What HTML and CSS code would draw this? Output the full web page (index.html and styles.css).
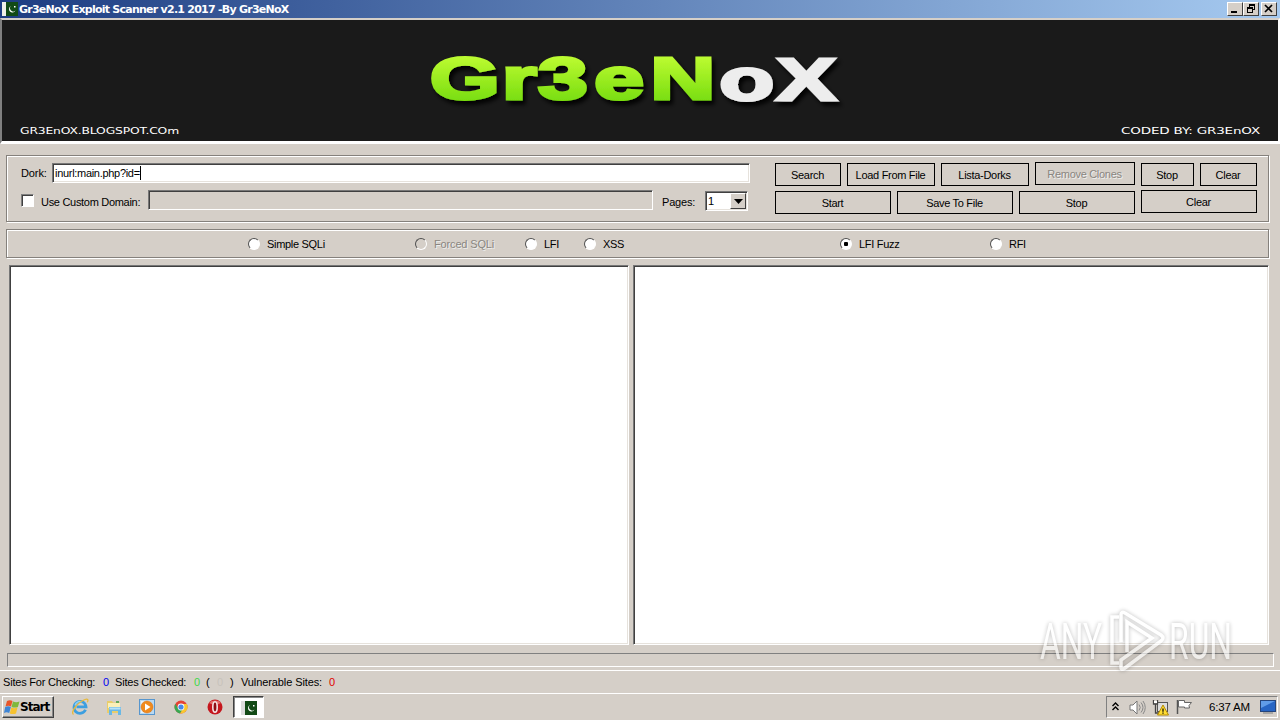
FILE: index.html
```html
<!DOCTYPE html>
<html lang="en">
<head>
    <meta charset="UTF-8">
    <title>Gr3eNoX Exploit Scanner v2.1 2017 -By Gr3eNoX</title>
    <link rel="stylesheet" href="styles.css">
</head>
<body>
    <div class="titlebar">
        <svg width="16" height="14" viewBox="0 0 16 14"><rect x="4" width="12" height="14" fill="#124a16"/><rect width="4" height="14" fill="#f0f0e8"/><path d="M9 4a3.400 3.400 0 1 0 4.500 4.500A3 3 0 1 1 9 4z" fill="#fff"/><rect x="12" y="4" width="1.500" height="1.500" fill="#fff"/></svg>
        <span class="title-text">Gr3eNoX Exploit Scanner v2.1 2017 -By Gr3eNoX</span>
        <div class="win-buttons">
            <div class="win-btn"><svg width="14" height="12"><path d="M3 8h6v2H3z"/></svg></div>
            <div class="win-btn"><svg width="14" height="12"><path d="M5 1h6v6H9V6h1V3H6v1H5zM3 4h6v6H3zM4 6v3h4V6z" fill-rule="evenodd"/></svg></div>
            <div class="win-btn close"><svg width="14" height="12"><path d="M3 2l7 7M10 2L3 9" stroke="#000" stroke-width="1.700"/></svg></div>
        </div>
    </div>

    <div class="banner">
        <svg width="1276" height="121" viewBox="2 20 1276 121">
            <defs>
                <linearGradient id="lime" x1="0" y1="0" x2="0" y2="1">
                    <stop offset="0.2" stop-color="#bafa30"/>
                    <stop offset="0.85" stop-color="#78dd10"/>
                </linearGradient>
                <filter id="shadow" x="-10%" y="-20%" width="120%" height="150%">
                    <feDropShadow dx="3" dy="4" stdDeviation="2" flood-color="#000" flood-opacity="0.9"/>
                </filter>
            </defs>
            <g class="logo" filter="url(#shadow)">
                <text class="logo-green" transform="scale(1.5 1)" x="286.500 334.500 358.500 396 433.500" y="99">Gr3eN</text>
                <text class="logo-white" transform="scale(1.5 1)" x="479.500 517.500" y="100">oX</text>
            </g>
            <text class="pixel" x="20" y="134" textLength="159" lengthAdjust="spacingAndGlyphs">GR3EnOX.BLOGSPOT.COm</text>
            <text class="pixel" x="1121" y="134" textLength="139" lengthAdjust="spacingAndGlyphs">CODED BY: GR3EnOX</text>
        </svg>
    </div>

    <div class="group search-group">
        <div class="fields">
            <div class="field-row">
                <span class="label dork-label">Dork:</span>
                <div class="sunken dork"><span class="typed">inurl:main.php?id=</span><i class="caret"></i></div>
            </div>
            <div class="field-row second">
                <div class="checkbox"></div>
                <span class="label domain-label">Use Custom Domain:</span>
                <div class="sunken domain"></div>
                <span class="label pages-label">Pages:</span>
                <div class="sunken combo"><span>1</span><div class="drop"><svg width="9" height="5"><path d="M0 0h9L4.500 5z"/></svg></div></div>
            </div>
        </div>
        <div class="buttons">
            <button class="w66">Search</button>
            <button class="w88">Load From File</button>
            <button class="w88">Lista-Dorks</button>
            <button class="w100 raised" disabled>Remove Clones</button>
            <button class="w53">Stop</button>
            <button class="w57">Clear</button>
            <button class="w116">Start</button>
            <button class="w116">Save To File</button>
            <button class="w116">Stop</button>
            <button class="w116 raised">Clear</button>
        </div>
    </div>

    <div class="group modes">
        <div class="mode simple"><i class="radio"></i><span>Simple SQLi</span></div>
        <div class="mode forced"><i class="radio"></i><span>Forced SQLi</span></div>
        <div class="mode lfi"><i class="radio"></i><span>LFI</span></div>
        <div class="mode xss"><i class="radio"></i><span>XSS</span></div>
        <div class="mode fuzz"><i class="radio checked"></i><span>LFI Fuzz</span></div>
        <div class="mode rfi"><i class="radio"></i><span>RFI</span></div>
    </div>

    <div class="lists">
        <div class="sunken list-left"></div>
        <div class="sunken list-right"></div>
    </div>
    <div class="progress"></div>

    <div class="status">
        <span class="s-checking">Sites For Checking:</span><span class="n blue">0</span>
        <span class="s-checked">Sites Checked:</span><span class="n green">0</span>
        <span class="s-open">(</span><span class="n pale">0</span><span class="s-close">)</span>
        <span class="s-vuln">Vulnerable Sites:</span><span class="n red">0</span>
    </div>

    <div class="taskbar">
        <div class="start">
            <svg width="16" height="16" viewBox="0 0 16 16"><path d="M3 2q3-1.500 5.500 0L7 7.500Q4.500 6 1.500 7.500z" fill="#e8552a"/><path d="M9 2.500q3 1.300 6.500 0L13.900 8q-3 1.200-6.400 0z" fill="#7fb83c"/><path d="M1.200 8q3-1.400 5.700 0L5.200 14q-2.700-1.300-5.200 0z" fill="#3f85d5"/><path d="M7.300 8.500q3 1.300 6.200 0L12 14.500q-3 1.200-6.200 0z" fill="#f6c22f"/></svg>
            <span>Start</span>
        </div>
        <div class="quick">
            <svg width="18" height="18" viewBox="0 0 18 18"><path d="M14.500 11.800A6 6 0 1 1 15 8.800H5.500" fill="none" stroke="#3c9fe0" stroke-width="2.800"/><path d="M4 7.500A5 5 0 0 1 11 4" fill="none" stroke="#8fd3f8" stroke-width="1.300"/><path d="M2.500 16.500C-1 14 7 4 14 1.500c3-1 3.500.5 2.300 2.800" fill="none" stroke="#e8b93a" stroke-width="1.300"/></svg>
            <svg width="18" height="18" viewBox="0 0 18 18"><path d="M2 3h5l1 1.500h7V15H2z" fill="#e9cd6a"/><path d="M3 5h12v5H3z" fill="#faf0b8"/><path d="M11 3h3v2h-3z" fill="#62a95a"/><path d="M4 9h12v8h-3v-4H7v4H4z" fill="#69b8e5"/><path d="M4.500 9.500h11v2h-11z" fill="#b8e2f6"/></svg>
            <svg width="18" height="18" viewBox="0 0 18 18"><rect x="1.500" y="1.500" width="15" height="15" fill="#b9d9f2" stroke="#5796ce"/><rect x="3" y="3" width="9" height="12" fill="#e5f2fb"/><circle cx="9" cy="9" r="6" fill="#f08a1d" stroke="#d36c12" stroke-width=".5"/><path d="M7 5.500L12.500 9 7 12.500z" fill="#fff"/></svg>
            <svg width="18" height="18" viewBox="0 0 18 18"><circle cx="9" cy="9" r="6.500" fill="#e44335"/><path d="M3.300 5.800A6.500 6.500 0 0 0 8 15.400L11.500 10.500 6.200 10.500z" fill="#38a852"/><path d="M9 6h5.800A6.500 6.500 0 0 1 8 15.400l3.800-6z" fill="#f9c72f"/><circle cx="9" cy="9" r="3.400" fill="#fff"/><circle cx="9" cy="9" r="2.600" fill="#4788e9"/></svg>
            <svg width="18" height="18" viewBox="0 0 18 18"><circle cx="9" cy="9" r="7.500" fill="#c5161d"/><path d="M3 5a7.500 6 0 0 1 12 0q-6 3-12 0z" fill="#e46a67"/><ellipse cx="9" cy="9" rx="2.200" ry="5.200" fill="#8f0d13" stroke="#f4e4e4" stroke-width="1.600"/></svg>
        </div>
        <div class="task">
            <svg width="16" height="14" viewBox="0 0 16 14"><rect x="4" width="12" height="14" fill="#124a16"/><rect width="4" height="14" fill="#ddd"/><path d="M9 4a3.400 3.400 0 1 0 4.500 4.500A3 3 0 1 1 9 4z" fill="#fff"/><rect x="12" y="4" width="1.500" height="1.500" fill="#fff"/></svg>
        </div>
        <div class="tray">
            <svg class="chevrons" width="7" height="9" viewBox="0 0 7 9"><path d="M.5 4L3.500 1l3 3M.5 8L3.500 5l3 3" fill="none" stroke="#000" stroke-width="1.400"/></svg>
            <svg class="speaker" width="17" height="15" viewBox="0 0 17 15"><path d="M1 5h3l4-4v13l-4-4H1z" fill="#fff" stroke="#777"/><path d="M10 4.500q2.500 3 0 6M12 2.500q4 5 0 10M14 1q4.500 6.500 0 13" fill="none" stroke="#888"/></svg>
            <svg class="network" width="17" height="17" viewBox="0 0 17 17"><rect x="5.500" y="3.500" width="10" height="9" fill="#ddd" stroke="#555"/><path d="M1.500 1v4h4V1M3.500 5v9H8" fill="none" stroke="#444" stroke-width="1.300"/><path d="M2 2h3v2H2z" fill="#fff"/><path d="M11 6l5.500 10h-11z" fill="#fd3" stroke="#b48a00"/><path d="M10.400 9.500h1.200v3.200h-1.200zM10.400 13.500h1.200v1.200h-1.200z"/></svg>
            <svg class="flag-icon" width="17" height="15" viewBox="0 0 17 15"><path d="M1.500 1v14" stroke="#555" stroke-width="1.500"/><path d="M2.500 1.500h6v2h7l-2.500 3 .5 2.500h-5V8h-6z" fill="#fff" stroke="#666"/></svg>
            <span class="clock">6:37 AM</span>
            <svg width="16" height="14" viewBox="0 0 16 14"><rect x=".5" y=".5" width="15" height="11" fill="#2765c4" stroke="#25457c"/><path d="M1 1h14L1 8z" fill="#609ce8"/><path d="M3 13h10" stroke="#999" stroke-width="1.500"/></svg>
        </div>
    </div>

    <svg class="watermark" width="214" height="76" viewBox="1032 600 214 76">
        <text x="1040" y="659" textLength="62" lengthAdjust="spacingAndGlyphs">ANY</text>
        <text x="1169" y="659" textLength="63" lengthAdjust="spacingAndGlyphs">RUN</text>
        <path d="M1119 617h-7v46h7M1121 642v-27q0-4 4-2l36 22q4 3 0 6l-36 27q-4 3-4-1v-7l31-22-25-16v30"/>
    </svg>
</body>
</html>
```
FILE: styles.css
```css
* {
    box-sizing: border-box;
}
body {
    margin: 0;
    width: 1280px;
    height: 720px;
    overflow: hidden;
    position: relative;
    background: #d5cfc8;
    color: #000;
    font-family: "Liberation Sans", Arial, sans-serif;
    font-size: 11px;
    line-height: 13px;
    letter-spacing: -0.1px;
    white-space: nowrap;
}
svg {
    display: block;
    flex: none;
}

/* title bar */
.titlebar {
    display: flex;
    align-items: center;
    height: 18px;
    padding: 0 3px 0 2px;
    background: linear-gradient(90deg, #1d3d82, #a6caf0);
}
.title-text {
    margin-left: 1px;
    padding-top: 1px;
    color: #fff;
    font: bold 11px/14px "DejaVu Sans", sans-serif;
    letter-spacing: -0.75px;
}
.win-buttons {
    display: flex;
    margin-left: auto;
}
.win-btn {
    width: 16px;
    height: 14px;
    border: 1px solid;
    border-color: #fff #404040 #404040 #fff;
    background: #d5cfc8;
    overflow: hidden;
}
.close {
    margin-left: 2px;
}

/* banner */
.banner {
    height: 126px;
    border: 2px solid;
    border-width: 2px 2px 3px;
    border-color: #d5cfc8 #fff #fff #808080;
    background: #1a1a1a;
}
.logo {
    font: bold 60px "Liberation Sans", Arial, sans-serif;
    letter-spacing: 0;
    stroke-width: 3px;
    stroke-linejoin: miter;
}
.logo-green {
    fill: url(#lime);
    stroke: url(#lime);
}
.logo-white {
    fill: #ededed;
    stroke: #ededed;
}
.pixel {
    font: 8px "DejaVu Sans", sans-serif;
    fill: #fff;
}

/* etched groups */
.group {
    width: 1263px;
    margin-left: 6px;
    border: 1px solid #85817c;
    box-shadow: 1px 1px 0 #fff, inset 1px 1px 0 #fff;
    display: flex;
}
.search-group {
    height: 67px;
    margin-top: 11px;
    padding: 7px 0 0 14px;
}
.fields {
    width: 754px;
}
.field-row {
    display: flex;
    height: 20px;
}
.second {
    margin-top: 7px;
    height: 22px;
}
.sunken {
    background: #fff;
    border: 1px solid;
    border-color: #777 #fff #fff #777;
    box-shadow: inset 1px 1px 0 #404040, inset -1px -1px 0 #e6e2dc;
}
.label {
    flex: none;
}
.dork-label {
    width: 31px;
    padding-top: 4px;
}
.dork {
    display: flex;
    width: 698px;
    padding: 2px 2px;
}
.typed {
    padding-top: 1px;
    letter-spacing: -0.3px;
}
.caret {
    width: 1px;
    height: 14px;
    background: #000;
}
.checkbox {
    width: 13px;
    height: 13px;
    margin-top: 4px;
    background: #fff;
    border: 1px solid;
    border-color: #808080 #fff #fff #808080;
    box-shadow: inset 1px 1px 0 #404040;
}
.domain-label {
    width: 114px;
    padding: 6px 0 0 7px;
    letter-spacing: -0.3px;
}
.domain {
    width: 505px;
    height: 20px;
    background: #d5cfc8;
    box-shadow: inset 1px 1px 0 #404040;
}
.pages-label {
    width: 52px;
    padding: 6px 0 0 9px;
    letter-spacing: -0.2px;
}
.combo {
    display: flex;
    width: 43px;
    height: 20px;
    margin-top: 1px;
    padding: 1px;
}
.combo span {
    width: 24px;
    padding: 2px 0 0 1px;
}
.drop {
    width: 16px;
    height: 16px;
    padding: 5px 0 0 3px;
    background: #d5cfc8;
    border: 1px solid;
    border-color: #fff #404040 #404040 #fff;
}
.buttons {
    display: flex;
    flex-wrap: wrap;
    align-content: flex-start;
    gap: 5px 6px;
    width: 483px;
}
button {
    height: 23px;
    padding: 1px 1px 0 0;
    border: 1px solid #000;
    border-radius: 0;
    background: #d5cfc8;
    color: #000;
    font: 11px/13px "Liberation Sans", Arial, sans-serif;
    letter-spacing: -0.3px;
}
button:disabled {
    color: #8a8680;
    text-shadow: 1px 1px 0 #eee;
}
.raised {
    margin: -1px 0 1px;
}
.w53 { width: 53px; }
.w57 { width: 57px; }
.w66 { width: 66px; }
.w88 { width: 88px; }
.w100 { width: 100px; }
.w116 { width: 116px; }

/* scan modes */
.modes {
    height: 29px;
    margin-top: 7px;
    padding-left: 241px;
    align-items: center;
}
.mode {
    display: flex;
    align-items: center;
    gap: 7px;
    flex: none;
}
.mode span {
    padding-top: 2px;
    letter-spacing: -0.3px;
}
.radio {
    width: 12px;
    height: 12px;
    border: 1px solid;
    border-color: #505050 #fff #fff #505050;
    border-radius: 50%;
    background: #fff;
}
.checked {
    background: radial-gradient(circle, #000 0 2px, #fff 2.5px);
}
.simple { width: 167px; }
.forced { width: 110px; }
.lfi { width: 59px; }
.xss { width: 256px; }
.fuzz { width: 150px; }
.forced span {
    color: #8a8680;
    letter-spacing: -0.15px;
    text-shadow: 1px 1px 0 #eee;
}
.forced .radio {
    background: #d5cfc8;
}

/* result lists */
.lists {
    display: flex;
    gap: 4px;
    margin: 7px 0 0 9px;
    height: 380px;
}
.list-left {
    width: 620px;
}
.list-right {
    width: 636px;
}
.progress {
    width: 1267px;
    height: 14px;
    margin: 8px 0 0 7px;
    border: 1px solid;
    border-color: #808080 #fff #fff #808080;
}

/* status strip */
.status {
    display: flex;
    height: 24px;
    margin-top: 3px;
    padding: 5px 0 0 3px;
    border: solid #fff;
    border-width: 1px 0;
}
.status span {
    flex: none;
}
.s-checking { width: 99px; letter-spacing: -0.2px; }
.s-checked { width: 78px; letter-spacing: -0.2px; }
.s-open { width: 11px; }
.s-close { width: 11px; }
.s-vuln { width: 87px; letter-spacing: -0.1px; }
.n { width: 13px; }
.blue { color: #0000f0; }
.green { color: #3fd84a; }
.pale { color: #c8c3bc; }
.red { color: #e00000; }
.blue, .green, .red {
    text-indent: 1px;
}

/* taskbar */
.taskbar {
    display: flex;
    height: 26px;
    padding: 2px 0 0 2px;
}
.start {
    display: flex;
    align-items: center;
    width: 52px;
    height: 22px;
    padding-left: 1px;
    border: 1px solid;
    border-color: #fff #404040 #404040 #fff;
    box-shadow: inset -1px -1px 0 #888;
    font: bold 12px/14px "DejaVu Sans", sans-serif;
    letter-spacing: -1px;
}
.quick {
    display: flex;
    gap: 15.7px;
    margin-left: 17px;
    padding-top: 2px;
    width: 162px;
}
.task {
    width: 31px;
    height: 22px;
    padding: 4px 0 0 7px;
    background: #fff;
    border: 1px solid;
    border-color: #404040 #fff #fff #404040;
    box-shadow: inset 1px 1px 0 #888;
}
.tray {
    display: flex;
    align-items: center;
    width: 172px;
    height: 22px;
    margin-left: auto;
    margin-right: 2px;
    border: 1px solid;
    border-color: #808080 #fff #fff #808080;
}
.chevrons { margin: -2px 0 0 5px; }
.speaker { margin-left: 10px; }
.network { margin-left: 6px; }
.flag-icon { margin: -2px 0 0 7px; }
.clock {
    width: 51px;
    margin-left: 16px;
    font-size: 11.5px;
    letter-spacing: -0.2px;
}

/* watermark over the lower right corner */
.watermark {
    position: absolute;
    left: 1032px;
    top: 600px;
    filter: drop-shadow(0 0 2px rgba(0, 0, 0, 0.4));
    opacity: 0.65;
}
.watermark text {
    font: 50px Roboto, sans-serif;
    letter-spacing: 0;
    fill: #fff;
}
.watermark path {
    fill: none;
    stroke: #fff;
    stroke-width: 3.5px;
}
```
